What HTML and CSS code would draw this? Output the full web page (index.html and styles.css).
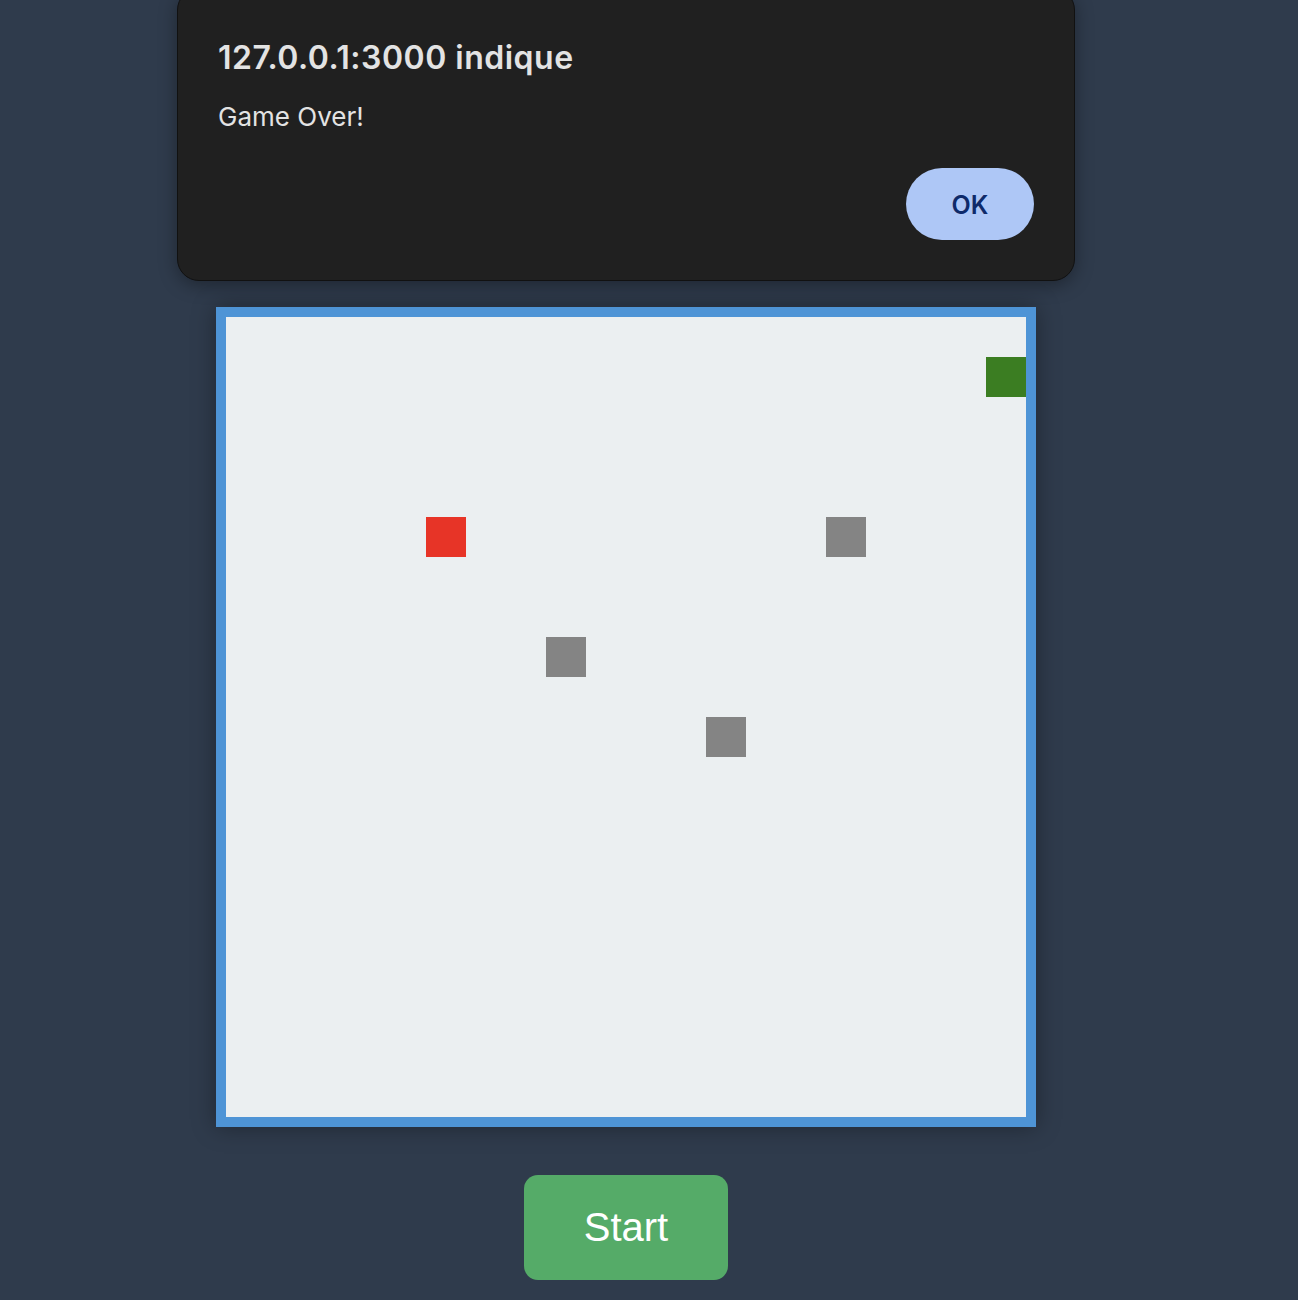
FILE: index.html
```html
<!DOCTYPE html>
<html lang="fr">
<head>
<meta charset="utf-8">
<title>Snake</title>
<link rel="stylesheet" href="styles.css">
</head>
<body>
<div class="page">
  <div class="dialog" role="alertdialog">
    <h2 class="dialog-title">127.0.0.1:3000 indique</h2>
    <p class="dialog-msg">Game Over!</p>
    <div class="dialog-actions"><button class="ok">OK</button></div>
  </div>
  <div class="board">
    <div class="cell snake" style="grid-column:20;grid-row:2"></div>
    <div class="cell food" style="grid-column:6;grid-row:6"></div>
    <div class="cell rock" style="grid-column:16;grid-row:6"></div>
    <div class="cell rock" style="grid-column:9;grid-row:9"></div>
    <div class="cell rock" style="grid-column:13;grid-row:11"></div>
  </div>
  <button class="start">Start</button>
</div>
</body>
</html>
```
FILE: styles.css
```css
html, body {
  margin: 0;
  padding: 0;
  background: #2f3b4c;
  height: 100%;
}
.page {
  position: relative;
  width: 1252px;
  min-height: 1300px;
  display: flex;
  flex-direction: column;
  align-items: center;
  padding-top: 307px;
  box-sizing: border-box;
}
.dialog {
  position: absolute;
  top: -12px;
  left: 177px;
  width: 898px;
  height: 293px;
  box-sizing: border-box;
  background: #202020;
  border: 1px solid #111;
  border-radius: 22px;
  box-shadow: 0 4px 18px rgba(0,0,0,0.35);
  padding: 51px 40px 0 40px;
  font-family: Inter, "Noto Sans", sans-serif;
  color: #e3e3e3;
}
.dialog-title {
  margin: 0;
  font-size: 32px;
  font-weight: 600;
  line-height: 36px;
  letter-spacing: 0.5px;
}
.dialog-msg {
  margin: 26px 0 0;
  font-size: 26px;
  line-height: 30px;
  font-weight: 400;
  letter-spacing: 0px;
}
.dialog-actions {
  display: flex;
  justify-content: flex-end;
  margin-top: 36px;
}
.ok {
  width: 128px;
  height: 72px;
  border: none;
  border-radius: 36px;
  background: #aec7f6;
  color: #0e2a6a;
  font-family: Inter, "Noto Sans", sans-serif;
  font-size: 25px;
  font-weight: 600;
  padding-top: 2px;
}
.board {
  width: 800px;
  height: 800px;
  border: 10px solid #4e94d6;
  background: #ebeff1;
  display: grid;
  grid-template-columns: repeat(20, 40px);
  grid-template-rows: repeat(20, 40px);
  box-shadow: 0 0 22px rgba(0,0,0,0.35);
}
.cell { width: 40px; height: 40px; }
.snake { background: #3b7d22; }
.food { background: #e73427; }
.rock { background: #848484; }
.start {
  margin-top: 48px;
  width: 204px;
  height: 105px;
  border: none;
  border-radius: 14px;
  background: #55ab68;
  color: #fff;
  font-family: "Liberation Sans", Arial, sans-serif;
  font-size: 40px;
}
```
